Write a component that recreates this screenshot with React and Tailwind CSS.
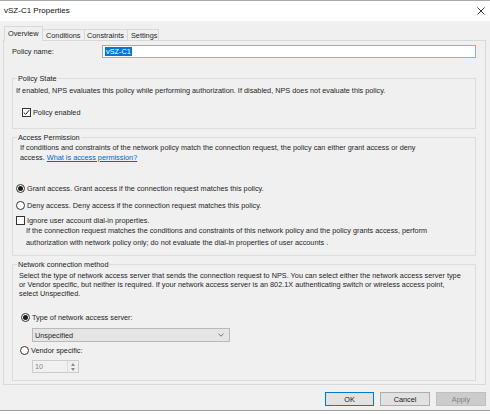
import React from "react";

function Radio({ checked }) {
  return (
    <span className="w-[9px] h-[9px] rounded-full border border-[#333333] bg-white flex items-center justify-center shrink-0">
      {checked && <span className="w-[5px] h-[5px] rounded-full bg-[#1a1a1a]" />}
    </span>
  );
}

function Check({ checked }) {
  return (
    <span className="w-[9px] h-[9px] border border-[#333333] bg-white flex items-center justify-center shrink-0">
      {checked && (
        <svg width="7" height="7" viewBox="0 0 7 7">
          <path d="M0.8 3.6 L2.7 5.4 L6.2 1.2" fill="none" stroke="#1a1a1a" strokeWidth="1" />
        </svg>
      )}
    </span>
  );
}

function Group({ label, className, children }) {
  return (
    <div className={"relative border border-[#dcdcdc] " + className}>
      <span className="absolute top-[-5px] left-[4px] px-[1px] bg-[#f0f0f0] leading-[9px] text-[#1a1a1a]">
        {label}
      </span>
      {children}
    </div>
  );
}

export default function App() {
  return (
    <div className="w-[490px] h-[414px] bg-[#f0f0f0] flex flex-col overflow-hidden font-['Liberation_Sans',Arial,sans-serif] text-[7.3px] text-[#1f1f1f]">
      {/* Title bar */}
      <div className="h-[21px] shrink-0 bg-white border-t border-[#a9a9a9] flex items-center justify-between pl-[4px] pr-[5px]">
        <span className="text-[8px] leading-[10px] text-[#111]">vSZ-C1 Properties</span>
        <svg width="8" height="8" viewBox="0 0 8 8">
          <path d="M0.5 0.5 L7.5 7.5 M7.5 0.5 L0.5 7.5" stroke="#333" strokeWidth="1" />
        </svg>
      </div>

      {/* Tabs */}
      <div className="flex items-end h-[15px] mt-[5px] ml-[4px] shrink-0 relative z-10">
        <div className="w-[39px] h-[15px] bg-[#f0f0f0] border border-b-0 border-[#d9d9d9] flex items-center pl-[3px] pb-[1px] leading-[9px]">
          Overview
        </div>
        <div className="w-[42px] h-[12px] border border-l-0 border-b-0 border-[#d9d9d9] flex items-center pl-[3px] leading-[9px]">
          Conditions
        </div>
        <div className="w-[43px] h-[12px] border border-l-0 border-b-0 border-[#d9d9d9] flex items-center pl-[2px] leading-[9px]">
          Constraints
        </div>
        <div className="w-[31px] h-[12px] border border-l-0 border-b-0 border-[#d9d9d9] flex items-center pl-[3px] leading-[9px]">
          Settings
        </div>
      </div>

      {/* Panel */}
      <div className="ml-[3px] w-[483px] h-[345px] -mt-px shrink-0 border border-[#d9d9d9] bg-[#f0f0f0] pl-[8px] pr-[9px] flex flex-col">
        {/* Policy name */}
        <div className="flex items-center h-[13px] mt-[4px]">
          <span className="w-[90px] leading-[9px]">Policy name:</span>
          <div className="flex-1 h-[13px] bg-white border border-[#7eb4ea] flex items-center pl-[2px]">
            <span className="bg-[#0078d7] text-white leading-[9px] px-px">vSZ-C1</span>
          </div>
        </div>

        {/* Policy State */}
        <Group label="Policy State" className="mt-[20px] h-[51px] pl-[3px] pt-[7px]">
          <p className="leading-[9px]">
            If enabled, NPS evaluates this policy while performing authorization. If disabled, NPS does not evaluate this policy.
          </p>
          <div className="flex items-center gap-[2px] h-[10px] mt-[12px] ml-[6px]">
            <Check checked />
            <span className="leading-[9px]">Policy enabled</span>
          </div>
        </Group>

        {/* Access Permission */}
        <Group label="Access Permission" className="mt-[8px] h-[119px] pl-[3px] pt-[5px]">
          <p className="leading-[9.5px] pl-[4px] pr-[33px]">
            If conditions and constraints of the network policy match the connection request, the policy can either grant access or deny access.{" "}
            <span className="text-[#0066cc] underline">What is access permission?</span>
          </p>
          <div className="flex items-center gap-[2px] h-[10px] mt-[21px]">
            <Radio checked />
            <span className="leading-[9px]">Grant access. Grant access if the connection request matches this policy.</span>
          </div>
          <div className="flex items-center gap-[2px] h-[10px] mt-[7px]">
            <Radio />
            <span className="leading-[9px]">Deny access. Deny access if the connection request matches this policy.</span>
          </div>
          <div className="flex items-center gap-[2px] h-[10px] mt-[5px]">
            <Check />
            <span className="leading-[9px]">Ignore user account dial-in properties.</span>
          </div>
          <p className="leading-[12px] pl-[10px] pr-[25px] mt-[0px]">
            If the connection request matches the conditions and constraints of this network policy and the policy grants access, perform authorization with network policy only; do not evaluate the dial-in properties of user accounts .
          </p>
        </Group>

        {/* Network connection method */}
        <Group label="Network connection method" className="mt-[8px] h-[117px] pl-[6px] pt-[6px]">
          <p className="leading-[9px] pr-[8px]">
            Select the type of network access server that sends the connection request to NPS. You can select either the network access server type or Vendor specific, but neither is required.  If your network access server is an 802.1X authenticating switch or wireless access point,
            <br />
            select Unspecified.
          </p>
          <div className="flex items-center gap-[2px] h-[10px] mt-[14px] ml-[2px]">
            <Radio checked />
            <span className="leading-[9px]">Type of network access server:</span>
          </div>
          <div className="w-[198px] h-[14px] mt-[6px] ml-[13px] bg-[#e5e5e5] border border-[#b9b9b9] flex items-center justify-between pl-[2px] pr-[5px]">
            <span className="leading-[9px]">Unspecified</span>
            <svg width="6" height="4" viewBox="0 0 6 4">
              <path d="M0.5 0.8 L3 3.2 L5.5 0.8" fill="none" stroke="#666" strokeWidth="0.9" />
            </svg>
          </div>
          <div className="flex items-center gap-[2px] h-[10px] mt-[3px] ml-[1px]">
            <Radio />
            <span className="leading-[9px]">Vendor specific:</span>
          </div>
          <div className="w-[47px] h-[13px] mt-[5px] ml-[13px] bg-[#f0f0f0] border border-[#cccccc] flex items-center">
            <span className="flex-1 pl-[2px] leading-[9px] text-[#8a8a8a]">10</span>
            <div className="w-[11px] h-full border-l border-[#dcdcdc] flex flex-col items-center justify-center gap-[2px]">
              <svg width="4" height="3" viewBox="0 0 4 3"><path d="M0 3 L2 0 L4 3 Z" fill="#8a8a8a" /></svg>
              <svg width="4" height="3" viewBox="0 0 4 3"><path d="M0 0 L2 3 L4 0 Z" fill="#8a8a8a" /></svg>
            </div>
          </div>
        </Group>
      </div>

      {/* Buttons */}
      <div className="flex justify-end gap-[6px] pr-[4px] mt-[7px] shrink-0">
        <button className="w-[49px] h-[14px] bg-[#e1e1e1] border border-[#0078d7] leading-[9px] text-[7.3px] text-[#1a1a1a]">OK</button>
        <button className="w-[50px] h-[14px] bg-[#e1e1e1] border border-[#adadad] leading-[9px] text-[7.3px] text-[#1a1a1a]">Cancel</button>
        <button className="w-[50px] h-[14px] bg-[#cccccc] border border-[#bfbfbf] leading-[9px] text-[7.3px] text-[#838383]">Apply</button>
      </div>

      <div className="mt-[4px] h-px bg-[#a0a0a0] shrink-0" />
      <div className="flex-1 bg-white" />
    </div>
  );
}
